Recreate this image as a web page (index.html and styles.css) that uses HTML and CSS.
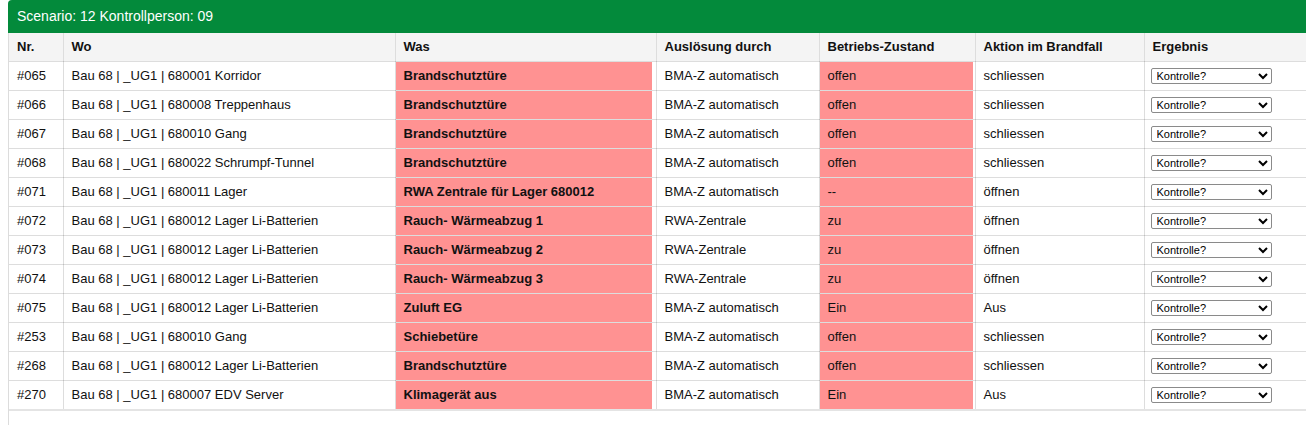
FILE: index.html
```html
<!DOCTYPE html>
<html lang="de">
<head>
<meta charset="utf-8">
<title>Scenario</title>
<link rel="stylesheet" href="styles.css">
</head>
<body>
<div class="panel">
  <div class="panel-heading">Scenario: 12 Kontrollperson: 09</div>
  <table class="grid">
    <colgroup>
      <col class="c-nr"><col class="c-wo"><col class="c-was"><col class="c-ausl"><col class="c-betr"><col class="c-akt"><col class="c-erg">
    </colgroup>
    <thead>
      <tr><th>Nr.</th><th>Wo</th><th>Was</th><th>Auslösung durch</th><th>Betriebs-Zustand</th><th>Aktion im Brandfall</th><th>Ergebnis</th></tr>
    </thead>
    <tbody>
      <tr><td>#065</td><td>Bau 68 | _UG1 | 680001 Korridor</td><td class="was">Brandschutztüre</td><td>BMA-Z automatisch</td><td class="zust">offen</td><td>schliessen</td><td><select class="sel"><option>Kontrolle?</option></select></td></tr>
      <tr><td>#066</td><td>Bau 68 | _UG1 | 680008 Treppenhaus</td><td class="was">Brandschutztüre</td><td>BMA-Z automatisch</td><td class="zust">offen</td><td>schliessen</td><td><select class="sel"><option>Kontrolle?</option></select></td></tr>
      <tr><td>#067</td><td>Bau 68 | _UG1 | 680010 Gang</td><td class="was">Brandschutztüre</td><td>BMA-Z automatisch</td><td class="zust">offen</td><td>schliessen</td><td><select class="sel"><option>Kontrolle?</option></select></td></tr>
      <tr><td>#068</td><td>Bau 68 | _UG1 | 680022 Schrumpf-Tunnel</td><td class="was">Brandschutztüre</td><td>BMA-Z automatisch</td><td class="zust">offen</td><td>schliessen</td><td><select class="sel"><option>Kontrolle?</option></select></td></tr>
      <tr><td>#071</td><td>Bau 68 | _UG1 | 680011 Lager</td><td class="was">RWA Zentrale für Lager 680012</td><td>BMA-Z automatisch</td><td class="zust">--</td><td>öffnen</td><td><select class="sel"><option>Kontrolle?</option></select></td></tr>
      <tr><td>#072</td><td>Bau 68 | _UG1 | 680012 Lager Li-Batterien</td><td class="was">Rauch- Wärmeabzug 1</td><td>RWA-Zentrale</td><td class="zust">zu</td><td>öffnen</td><td><select class="sel"><option>Kontrolle?</option></select></td></tr>
      <tr><td>#073</td><td>Bau 68 | _UG1 | 680012 Lager Li-Batterien</td><td class="was">Rauch- Wärmeabzug 2</td><td>RWA-Zentrale</td><td class="zust">zu</td><td>öffnen</td><td><select class="sel"><option>Kontrolle?</option></select></td></tr>
      <tr><td>#074</td><td>Bau 68 | _UG1 | 680012 Lager Li-Batterien</td><td class="was">Rauch- Wärmeabzug 3</td><td>RWA-Zentrale</td><td class="zust">zu</td><td>öffnen</td><td><select class="sel"><option>Kontrolle?</option></select></td></tr>
      <tr><td>#075</td><td>Bau 68 | _UG1 | 680012 Lager Li-Batterien</td><td class="was">Zuluft EG</td><td>BMA-Z automatisch</td><td class="zust">Ein</td><td>Aus</td><td><select class="sel"><option>Kontrolle?</option></select></td></tr>
      <tr><td>#253</td><td>Bau 68 | _UG1 | 680010 Gang</td><td class="was">Schiebetüre</td><td>BMA-Z automatisch</td><td class="zust">offen</td><td>schliessen</td><td><select class="sel"><option>Kontrolle?</option></select></td></tr>
      <tr><td>#268</td><td>Bau 68 | _UG1 | 680012 Lager Li-Batterien</td><td class="was">Brandschutztüre</td><td>BMA-Z automatisch</td><td class="zust">offen</td><td>schliessen</td><td><select class="sel"><option>Kontrolle?</option></select></td></tr>
      <tr><td>#270</td><td>Bau 68 | _UG1 | 680007 EDV Server</td><td class="was">Klimagerät aus</td><td>BMA-Z automatisch</td><td class="zust">Ein</td><td>Aus</td><td><select class="sel"><option>Kontrolle?</option></select></td></tr>
    </tbody>
  </table>
</div>
</body>
</html>
```

FILE: styles.css
```css
html, body {
  overflow: hidden;
}
body {
  margin: 0;
  font-family: "Liberation Sans", Arial, sans-serif;
  font-size: 13px;
  color: #111;
  background: #fff;
}
.panel {
  margin-left: 8px;
  border-left: 1px solid #dcdcdc;
  border-top-left-radius: 4px;
  min-height: 460px;
}
.panel-heading {
  background: #038a3b;
  color: #fff;
  font-size: 14px;
  line-height: 19px;
  padding: 7px 8px 7px 9px;
  border-top-left-radius: 4px;
  margin-left: -1px;
}
.grid {
  border-collapse: collapse;
  table-layout: fixed;
  width: 1298px;
  border-bottom: 2px solid #e4e4e4;
}
.c-nr { width: 54px; }
.c-wo { width: 332px; }
.c-was { width: 261px; }
.c-ausl { width: 163px; }
.c-betr { width: 156px; }
.c-akt { width: 169px; }
.c-erg { width: 163px; }
.grid th, .grid td {
  text-align: left;
  padding: 6px 8px;
  line-height: 16px;
  height: 16px;
  white-space: nowrap;
  overflow: hidden;
  border: 1px solid rgba(0, 0, 0, 0.135);
}
.grid tr > :first-child { border-left: none; }
.grid tr > :last-child { border-right: none; }
.grid thead th {
  background: #f4f4f4;
  font-weight: bold;
  border-top: none;
}
.grid tbody td {
  background: #fff;
}
.grid td.was {
  background: #ff9292;
  font-weight: bold;
  box-shadow: inset -4px 0 0 #fff;
}
.grid td.zust {
  background: #ff9292;
  box-shadow: inset -2px 0 0 #fff;
}
.sel {
  display: block;
  box-sizing: border-box;
  font-family: "Liberation Sans", Arial, sans-serif;
  font-size: 11px;
  width: 121px;
  height: 16px;
  padding: 0 1px;
  margin: 0 0 0 -2px;
  color: #000;
  background: #fff;
  border: 1px solid #8a8a8a;
  border-radius: 2px;
}
```
